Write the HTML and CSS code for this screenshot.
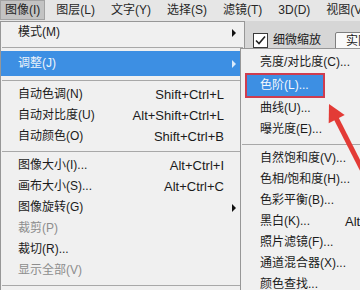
FILE: index.html
```html
<!DOCTYPE html>
<html lang="zh-CN">
<head>
    <meta charset="UTF-8">
    <title>图像 - 调整 - 色阶</title>
    <link rel="stylesheet" href="styles.css">
</head>
<body>

<nav class="menubar">
    <span class="menubar-item active">图像(I)</span>
    <span class="menubar-item">图层(L)</span>
    <span class="menubar-item">文字(Y)</span>
    <span class="menubar-item">选择(S)</span>
    <span class="menubar-item">滤镜(T)</span>
    <span class="menubar-item">3D(D)</span>
    <span class="menubar-item">视图(V)</span>
</nav>

<div class="options">
    <span class="check-box">
        <svg width="13" height="13" viewBox="0 0 13 13"><path d="M2 6.5 L5 9.5 L11 2.5" fill="none" stroke="#222" stroke-width="1.6"/></svg>
    </span>
    <span class="check-label">细微缩放</span>
    <span class="btn">实际像素</span>
</div>

<div class="menu main-menu">
    <div class="item"><span>模式(M)</span><span class="key"></span><span class="more"></span></div>
    <div class="sep"></div>
    <div class="item hl"><span>调整(J)</span><span class="key"></span><span class="more"></span></div>
    <div class="sep"></div>
    <div class="item"><span>自动色调(N)</span><span class="key">Shift+Ctrl+L</span><span></span></div>
    <div class="item"><span>自动对比度(U)</span><span class="key">Alt+Shift+Ctrl+L</span><span></span></div>
    <div class="item"><span>自动颜色(O)</span><span class="key">Shift+Ctrl+B</span><span></span></div>
    <div class="sep"></div>
    <div class="item"><span>图像大小(I)...</span><span class="key">Alt+Ctrl+I</span><span></span></div>
    <div class="item"><span>画布大小(S)...</span><span class="key">Alt+Ctrl+C</span><span></span></div>
    <div class="item"><span>图像旋转(G)</span><span class="key"></span><span class="more"></span></div>
    <div class="item disabled"><span>裁剪(P)</span><span class="key"></span><span></span></div>
    <div class="item"><span>裁切(R)...</span><span class="key"></span><span></span></div>
    <div class="item disabled"><span>显示全部(V)</span><span class="key"></span><span></span></div>
    <div class="sep"></div>
</div>

<div class="menu submenu">
    <div class="item"><span>亮度/对比度(C)...</span></div>
    <div class="item picked"><span>色阶(L)...</span></div>
    <div class="item"><span>曲线(U)...</span></div>
    <div class="item"><span>曝光度(E)...</span></div>
    <div class="sep"></div>
    <div class="item"><span>自然饱和度(V)...</span></div>
    <div class="item"><span>色相/饱和度(H)...</span></div>
    <div class="item"><span>色彩平衡(B)...</span></div>
    <div class="item"><span>黑白(K)...</span><span class="key">Alt+Shift+Ctrl+B</span></div>
    <div class="item"><span>照片滤镜(F)...</span></div>
    <div class="item"><span>通道混合器(X)...</span></div>
    <div class="item"><span>颜色查找...</span></div>
</div>

<svg class="callout" width="62" height="80" viewBox="0 0 62 80">
    <line x1="35" y1="21" x2="68" y2="86" stroke="#e33b36" stroke-width="5"/>
    <polygon points="29,9 44.7,20 28.7,28.2" fill="#e33b36"/>
</svg>

</body>
</html>
```

FILE: styles.css
```css
body {
    margin: 0;
    width: 360px;
    height: 290px;
    overflow: hidden;
    position: relative;
    font-family: "Liberation Sans", "Noto Sans CJK SC", sans-serif;
    font-size: 12px;
    color: #1b1b1b;
    background-color: #d6d6d6;
}
.menubar {
    display: flex;
    gap: 6px;
    height: 21px;
    background-color: #e6e6e6;
}
.menubar-item {
    height: 18px;
    line-height: 18px;
    padding: 0 4px;
    border: 1px solid transparent;
    white-space: nowrap;
    color: #262626;
}
.menubar-item.active {
    background-color: #c3c3c3;
    border-color: #a3a3a3;
}
.options {
    display: flex;
    align-items: flex-start;
    height: 40px;
    box-sizing: border-box;
    padding: 12px 0 0 253px;
    background-color: #d6d6d6;
    white-space: nowrap;
}
.check-box {
    width: 13px;
    height: 13px;
    border: 1px solid #3a3a3a;
    background-color: #ffffff;
}
.check-box svg {
    display: block;
}
.check-label {
    margin-left: 5px;
    line-height: 15px;
}
.btn {
    margin-left: 14px;
    margin-top: -1px;
    height: 17px;
    line-height: 17px;
    padding: 0 10px;
    border: 1px solid #7f7f7f;
    border-radius: 2px;
    background-color: #fafafa;
}
.menu {
    position: absolute;
    box-sizing: border-box;
    background-color: #f0f0f0;
    border: 1px solid #979797;
}
.main-menu {
    left: 0;
    top: 21px;
    width: 245px;
    height: 290px;
}
.submenu {
    left: 240px;
    top: 48px;
    width: 150px;
    height: 260px;
    padding-top: 3px;
}
.item {
    line-height: 21px;
    white-space: nowrap;
}
.main-menu .item {
    display: grid;
    grid-template-columns: 1fr auto 20px;
    padding-left: 17px;
}
.submenu .item {
    display: grid;
    grid-template-columns: 85px auto;
    padding-left: 19px;
}
.key {
    font-size: 13px;
}
.more {
    display: flex;
    align-items: center;
    justify-content: center;
}
.more::after {
    content: "";
    border-left: 4px solid #111;
    border-top: 4px solid transparent;
    border-bottom: 4px solid transparent;
}
.item.hl {
    padding-top: 2px;
    padding-bottom: 2px;
    background-color: #3d8fe3;
    color: #eef4fb;
}
.item.hl .more::after {
    border-left-color: #dcebfb;
}
.item.disabled {
    color: #8d8d8d;
}
.submenu .item.picked {
    display: block;
    width: 80px;
    box-sizing: border-box;
    margin-left: 4px;
    padding-left: 13px;
    border: 2px solid #cf3d4f;
    background-color: #3d8fe3;
    color: #f4f8fd;
}
.sep {
    display: flex;
    align-items: center;
    height: 8px;
}
.sep::before {
    content: "";
    flex: 1;
    height: 1px;
    margin: 0 1px;
    background-color: #a8a8a8;
}
.callout {
    position: absolute;
    left: 300px;
    top: 95px;
}
```
